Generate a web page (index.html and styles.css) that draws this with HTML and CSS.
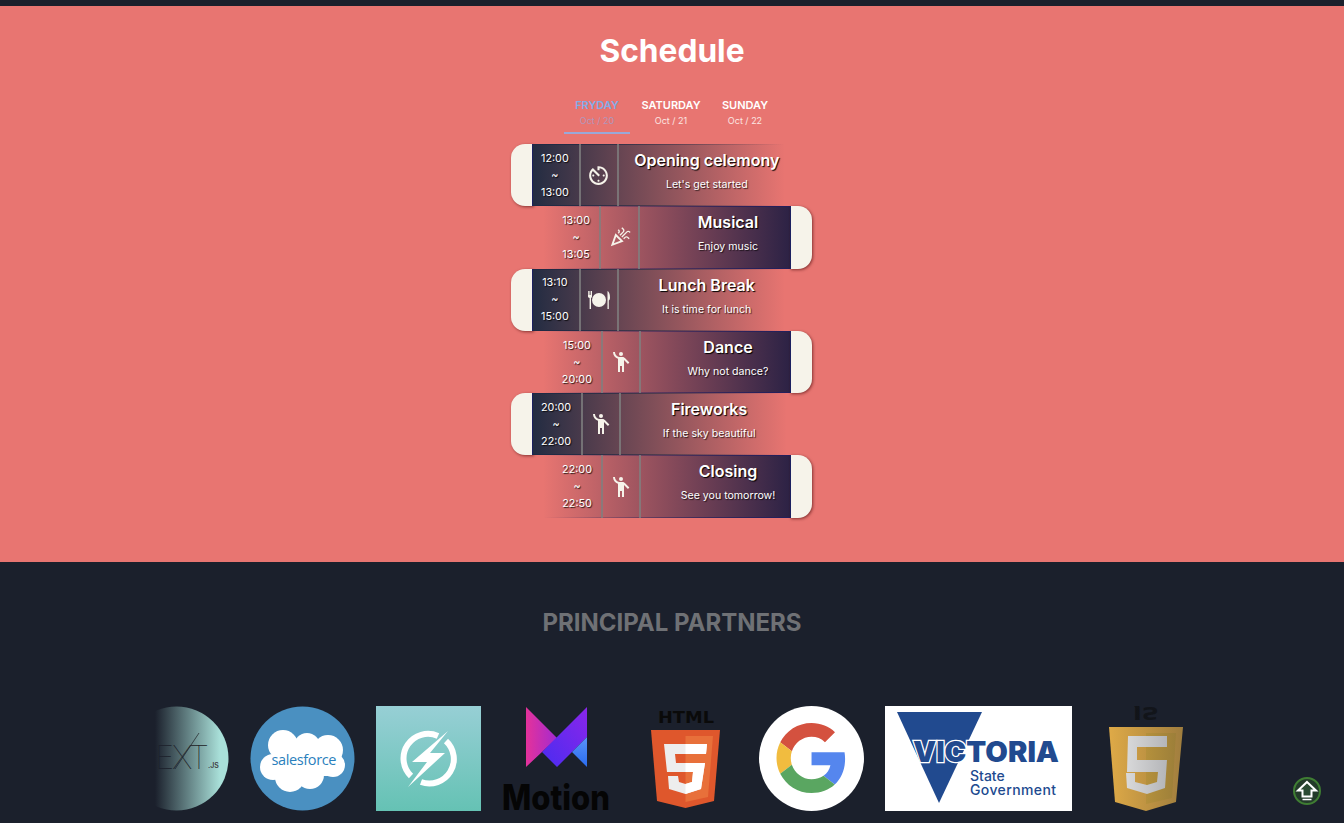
FILE: index.html
```html
<!DOCTYPE html>
<html lang="en">
  <head>
    <meta charset="UTF-8" />
    <meta name="viewport" content="width=device-width, initial-scale=1.0" />
    <title>Schedule</title>
    <link rel="stylesheet" href="styles.css">
  </head>

  <body>
    <div class="topbar"></div>

    <section class="schedule">
      <h1>Schedule</h1>

      <div class="tabs">
        <div class="tab active"><b>FRYDAY</b><span>Oct / 20</span></div>
        <div class="tab"><b>SATURDAY</b><span>Oct / 21</span></div>
        <div class="tab"><b>SUNDAY</b><span>Oct / 22</span></div>
      </div>

      <div class="rows">
        <div class="row odd">
          <div class="cap"></div>
          <div class="band">
            <div class="time">12:00<br />~<br />13:00</div>
            <div class="icon">
              <svg width="25" height="25" viewBox="0 0 24 24"><path d="M11 17c0 .55.45 1 1 1s1-.45 1-1-.45-1-1-1-1 .45-1 1zm0-14v4h2V5.08c3.39.49 6 3.39 6 6.92 0 3.87-3.13 7-7 7s-7-3.13-7-7c0-1.68.59-3.22 1.58-4.42L12 13l1.41-1.41-6.8-6.8v.02C4.42 6.45 3 9.05 3 12c0 4.97 4.02 9 9 9 4.97 0 9-4.03 9-9s-4.03-9-9-9h-1zm7 9c0-.55-.45-1-1-1s-1 .45-1 1 .45 1 1 1 1-.45 1-1zM6 12c0 .55.45 1 1 1s1-.45 1-1-.45-1-1-1-1 .45-1 1z"/></svg>
            </div>
            <div class="info"><h3>Opening celemony</h3><p>Let's get started</p></div>
          </div>
        </div>

        <div class="row even musical">
          <div class="band">
            <div class="time">13:00<br />~<br />13:05</div>
            <div class="icon">
              <svg width="22" height="22" viewBox="0 0 24 24"><path fill-rule="evenodd" d="M2 22l14-5-9-9-5 14zm10.35-5.82L5.3 18.7l2.52-7.05 4.53 4.53z"/><path d="M14.53 12.53l5.59-5.59c.49-.49 1.28-.49 1.77 0l.59.59 1.06-1.06-.59-.59c-1.07-1.07-2.82-1.07-3.89 0l-5.59 5.59zM10.06 6.88l-.59.59 1.06 1.06.59-.59c1.07-1.07 1.07-2.82 0-3.89l-.59-.59-1.06 1.07.59.59c.48.48.48 1.28 0 1.76zM17.06 11.88l-1.59 1.59 1.06 1.06 1.59-1.59c.49-.49 1.28-.49 1.77 0l1.61 1.61 1.06-1.06-1.61-1.61c-1.08-1.07-2.82-1.07-3.89 0zM15.06 5.88l-3.59 3.59 1.06 1.06 3.59-3.59c1.07-1.07 1.07-2.82 0-3.89l-1.59-1.59-1.06 1.06 1.59 1.59c.48.49.48 1.29 0 1.77z"/></svg>
            </div>
            <div class="info"><h3>Musical</h3><p>Enjoy music</p></div>
          </div>
          <div class="cap"></div>
        </div>

        <div class="row odd">
          <div class="cap"></div>
          <div class="band">
            <div class="time">13:10<br />~<br />15:00</div>
            <div class="icon">
              <svg width="24" height="24" viewBox="0 0 24 24"><circle cx="12" cy="12" r="7"/><path d="M1 3h.8v4h.6V3h.8v4h.6V3H5v5.5c0 .8-.5 1.3-1 1.5v11H2.600V10c-.9-.2-1.600-.8-1.600-1.500zM20.500 3c1.500.6 2.500 3 2.500 6.500 0 1.500-.5 2.500-1.200 3V21h-1.300z"/></svg>
            </div>
            <div class="info"><h3>Lunch Break</h3><p>It is time for lunch</p></div>
          </div>
        </div>

        <div class="row even">
          <div class="band">
            <div class="time">15:00<br />~<br />20:00</div>
            <div class="icon">
              <svg width="24" height="24" viewBox="0 0 24 24"><circle cx="12" cy="4" r="2"/><path d="M15.890 8.110C15.500 7.720 14.830 7 13.530 7h-2.540C8.240 6.990 6 4.750 6 2H4c0 3.160 2.110 5.840 5 6.710V22h2v-6h2v6h2V10.050L18.950 14l1.410-1.410-4.470-4.480z"/></svg>
            </div>
            <div class="info"><h3>Dance</h3><p>Why not dance?</p></div>
          </div>
          <div class="cap"></div>
        </div>

        <div class="row odd">
          <div class="cap"></div>
          <div class="band">
            <div class="time">20:00<br />~<br />22:00</div>
            <div class="icon">
              <svg width="24" height="24" viewBox="0 0 24 24"><circle cx="12" cy="4" r="2"/><path d="M15.890 8.110C15.500 7.720 14.830 7 13.530 7h-2.540C8.240 6.990 6 4.750 6 2H4c0 3.160 2.110 5.840 5 6.710V22h2v-6h2v6h2V10.050L18.950 14l1.410-1.410-4.470-4.480z"/></svg>
            </div>
            <div class="info"><h3>Fireworks</h3><p>If the sky beautiful</p></div>
          </div>
        </div>

        <div class="row even">
          <div class="band">
            <div class="time">22:00<br />~<br />22:50</div>
            <div class="icon">
              <svg width="24" height="24" viewBox="0 0 24 24"><circle cx="12" cy="4" r="2"/><path d="M15.890 8.110C15.500 7.720 14.830 7 13.530 7h-2.540C8.240 6.990 6 4.750 6 2H4c0 3.160 2.110 5.840 5 6.710V22h2v-6h2v6h2V10.050L18.950 14l1.410-1.410-4.470-4.480z"/></svg>
            </div>
            <div class="info"><h3>Closing</h3><p>See you tomorrow!</p></div>
          </div>
          <div class="cap"></div>
        </div>
      </div>
    </section>

    <section class="partners">
      <h2>PRINCIPAL PARTNERS</h2>

      <div class="strip">
        <div class="logo first">
          <svg width="105" height="105" viewBox="0 0 105 105">
            <circle cx="52.500" cy="52.500" r="52" fill="#a9e0d9"/>
            <text x="8" y="63" class="next-word" textLength="77">NEXT</text>
            <line x1="51" y1="63" x2="75" y2="27" stroke="#222" stroke-width=".7"/>
            <text x="84" y="62" class="next-js">.JS</text>
          </svg>
        </div>

        <div class="logo">
          <svg width="105" height="105" viewBox="0 0 105 105">
            <circle cx="52.500" cy="52.500" r="52" fill="#4a90c1"/>
            <g fill="#fff">
              <circle cx="33" cy="39" r="15"/><circle cx="57" cy="40" r="13"/><circle cx="78" cy="44" r="15"/>
              <circle cx="23" cy="61" r="13"/><circle cx="40" cy="71" r="15"/><circle cx="60" cy="69" r="14"/>
              <circle cx="83" cy="59" r="12"/><rect x="24" y="38" width="60" height="32"/>
            </g>
            <text x="54" y="59" class="sf-word" textLength="65">salesforce</text>
          </svg>
        </div>

        <div class="logo">
          <svg width="105" height="105" viewBox="0 0 105 105">
            <defs>
              <linearGradient id="tealGrad" x1="0" y1="0" x2="0" y2="1">
                <stop offset="0" stop-color="#97cfd5"/><stop offset="1" stop-color="#65c2b4"/>
              </linearGradient>
            </defs>
            <rect width="105" height="105" fill="url(#tealGrad)"/>
            <g fill="none" stroke="#fff" stroke-width="6">
              <path d="M62 30A24.500 24.500 0 0 0 35 70"/>
              <path d="M70 35A24.500 24.500 0 0 1 45 76"/>
            </g>
            <path d="M72 25L36 56H51L32 81L69 47H54z" fill="#fff"/>
          </svg>
        </div>

        <div class="logo wide">
          <svg width="110" height="105" viewBox="0 0 110 105">
            <defs>
              <linearGradient id="mPink" x1="0" y1="0" x2="1" y2="0">
                <stop offset="0" stop-color="#e4329a"/><stop offset="1" stop-color="#a42ad0"/>
              </linearGradient>
              <linearGradient id="mPurple" x1="1" y1="0" x2="0" y2="1">
                <stop offset="0" stop-color="#8a26ea"/><stop offset="1" stop-color="#4a2cf0"/>
              </linearGradient>
              <linearGradient id="mBlue" x1="0" y1="0" x2="0" y2="1">
                <stop offset="0" stop-color="#5a94f6"/><stop offset="1" stop-color="#2a6cf0"/>
              </linearGradient>
            </defs>
            <path d="M24 1L55 32L40 46L24 61z" fill="url(#mPink)"/>
            <path d="M85 1V31L55 61L40 46z" fill="url(#mPurple)"/>
            <path d="M85 31V61L70 46z" fill="url(#mBlue)"/>
            <text x="0" y="104" class="motion-word" textLength="108" lengthAdjust="spacingAndGlyphs">Motion</text>
          </svg>
        </div>

        <div class="logo">
          <svg width="105" height="105" viewBox="0 0 105 105">
            <text x="25" y="17" class="html-word" textLength="56" lengthAdjust="spacingAndGlyphs">HTML</text>
            <path d="M18 24H87L81 95L52.500 102L24 95z" fill="#df572c"/>
            <path d="M52.500 30H80L75 91L52.500 96z" fill="#e8703a"/>
            <path d="M31 38H74L73 48H42L43 57H72L68 83L52.500 88L36 83L35 70H45L46 76L52.500 78L59 76L60 66H34z" fill="#ededed"/>
            <path d="M52.500 38H74L73 48H52.500zM52.500 57H72L68 83L52.500 88V78L59 76L60 66H52.500z" fill="#fff"/>
          </svg>
        </div>

        <div class="logo">
          <svg width="105" height="105" viewBox="0 0 105 105">
            <circle cx="52.500" cy="52.500" r="52.500" fill="#fff"/>
            <g transform="translate(17.500 17) scale(1.460)">
              <path fill="#d4513f" d="M24 9.500c3.540 0 6.710 1.220 9.210 3.600l6.850-6.850C35.900 2.380 30.470 0 24 0 14.620 0 6.510 5.380 2.560 13.220l7.980 6.190C12.430 13.720 17.740 9.500 24 9.500z"/>
              <path fill="#5586ee" d="M46.980 24.550c0-1.570-.15-3.090-.38-4.550H24v9.020h12.940c-.58 2.960-2.260 5.480-4.780 7.180l7.730 6c4.510-4.180 7.090-10.360 7.090-17.650z"/>
              <path fill="#f1bc3f" d="M10.530 28.590c-.48-1.450-.76-2.990-.76-4.590s.27-3.140.76-4.590l-7.980-6.190C.92 16.460 0 20.120 0 24c0 3.880.92 7.540 2.560 10.780l7.970-6.190z"/>
              <path fill="#5aa661" d="M24 48c6.480 0 11.930-2.130 15.890-5.810l-7.730-6c-2.150 1.450-4.920 2.300-8.160 2.300-6.260 0-11.570-4.220-13.470-9.910l-7.980 6.190C6.510 42.620 14.620 48 24 48z"/>
            </g>
          </svg>
        </div>

        <div class="logo vic">
          <svg width="187" height="105" viewBox="0 0 187 105">
            <rect width="187" height="105" fill="#fff"/>
            <path d="M12 6H97L54 97z" fill="#214a8f"/>
            <text x="28" y="56" class="vic-word" textLength="146" lengthAdjust="spacingAndGlyphs">VICTORIA</text>
            <text x="85" y="75" class="vic-sub">State</text>
            <text x="85" y="89" class="vic-sub" textLength="86">Government</text>
          </svg>
        </div>

        <div class="logo">
          <svg width="105" height="105" viewBox="0 0 105 105">
            <text transform="translate(40 1) scale(1 -1)" y="0" class="js-word" textLength="26" lengthAdjust="spacingAndGlyphs">JS</text>
            <path d="M16 21H90L83 96L53 105L22 96z" fill="#dfaa47"/>
            <path d="M53 27H83L79 92L53 98z" fill="#d2a63f"/>
            <path d="M35 30H74V41H44V54H74L72 82L54 88L34 82L33 67H42V76L54 79L64 76L65 66H34z" fill="#e8e8e8"/>
          </svg>
        </div>

        <div class="fade left"></div>
        <div class="fade right"></div>
      </div>
    </section>

    <!-- back to top -->
    <a class="totop" href="#">
      <svg width="28" height="28" viewBox="0 0 28 28">
        <circle cx="14" cy="14" r="13" fill="#233a2a" stroke="#3f7d33" stroke-width="2"/>
        <path d="M14 5L23 13.500H18.500V19.500H9.500V13.500H5z" fill="#2b4b33" stroke="#fff" stroke-width="2"/>
        <path d="M9.500 22.500H18.500" stroke="#fff" stroke-width="1.500"/>
      </svg>
    </a>
  </body>
</html>
```

FILE: styles.css
```css
* {
  box-sizing: border-box;
}

html,
body {
  margin: 0;
  height: 823px;
  overflow: hidden;
}

body {
  font-family: Inter, "Liberation Sans", sans-serif;
  background-color: #1b202c;
  color: #fff;
}

.topbar {
  height: 6px;
  background-color: #1b202c;
}

.schedule {
  height: 556px;
  background-color: #e87571;
  padding-top: 25px;
  display: flex;
  flex-direction: column;
  align-items: center;
}

h1 {
  margin: 0;
  font-size: 31.7px;
  line-height: 40px;
  font-weight: 700;
}

.tabs {
  display: flex;
  gap: 8px;
  margin-top: 25px;
  margin-left: -2px;
}

.tab {
  width: 66px;
  height: 38px;
  display: flex;
  flex-direction: column;
  align-items: center;
  white-space: nowrap;
}

.tab b {
  font-size: 11px;
  line-height: 14px;
  margin-top: 2px;
  font-weight: 600;
}

.tab span {
  font-size: 9px;
  line-height: 13px;
  margin-top: 2px;
  color: #fbe6e2;
}

.tab.active {
  border-bottom: 2px solid #9aa8d8;
}

.tab.active b {
  color: #82ace8;
}

.tab.active span {
  color: #b296bb;
}

.rows {
  width: 301px;
  margin-top: 10px;
  margin-left: -21px;
  display: flex;
  flex-direction: column;
}

.row {
  height: 62.3px;
  display: flex;
}

.row.odd {
  align-self: flex-start;
}

.row.even {
  align-self: flex-end;
}

.band {
  display: flex;
}

.odd .band {
  background:
    linear-gradient(to right, #1f2a44, transparent) top / 100% 1px no-repeat,
    linear-gradient(to right, #1f2a44, transparent) bottom / 100% 1px no-repeat,
    linear-gradient(to right, #232c42, transparent);
}

.even .band {
  padding-left: 10px;
  background:
    linear-gradient(to left, #241f5c, transparent) top / 100% 1px no-repeat,
    linear-gradient(to left, #241f5c, transparent) bottom / 100% 1px no-repeat,
    linear-gradient(to left, #2c2245, transparent);
}

.cap {
  width: 22px;
  background-color: #f6f3ea;
  box-shadow: 1px 1px 3px rgba(70, 10, 10, 0.6);
}

.odd .cap {
  border-right: 1px solid #1b2060;
  border-radius: 14px 0 0 14px;
}

.even .cap {
  border-left: 1px solid #1b2060;
  border-radius: 0 14px 14px 0;
}

.time {
  padding: 0 9px;
  border-right: 2px solid rgba(128, 128, 128, 0.8);
  font-size: 10.8px;
  line-height: 17px;
  text-align: center;
  display: flex;
  align-items: center;
  text-shadow: 1px 1px 1px rgba(0, 0, 0, 0.8);
}

.odd .time {
  padding: 0 10px 0 8px;
}

.icon {
  width: 38px;
  border-right: 2px solid rgba(128, 128, 128, 0.8);
  display: flex;
  align-items: center;
  justify-content: center;
}

.musical .icon {
  width: 39px;
}

.icon svg {
  fill: #f6f3ea;
}

.info {
  text-align: center;
  white-space: nowrap;
}

.odd .info {
  width: 166px;
  padding-left: 10px;
}

.even .info {
  width: 149px;
  padding-left: 25px;
}

.musical .info {
  width: 150px;
  padding-left: 26px;
}

.info h3 {
  margin: 5px 0 0;
  font-size: 16px;
  line-height: 22px;
  font-weight: 600;
  text-shadow: 1px 1px 1px #000;
}

.info p {
  margin: 7px 0 0;
  font-size: 10.6px;
  line-height: 14px;
  text-shadow: 1px 1px 1px rgba(0, 0, 0, 0.7);
}

.partners {
  height: 261px;
  background-color: #1b202c;
  padding-top: 46px;
}

h2 {
  margin: 0;
  font-size: 24px;
  line-height: 30px;
  font-weight: 700;
  text-align: center;
  color: #6f7175;
}

.strip {
  width: 1034px;
  height: 105px;
  margin: 68px 0 0 155px;
  display: flex;
  gap: 21px;
  overflow: hidden;
  position: relative;
}

.logo {
  flex: none;
  width: 105px;
  height: 105px;
}

.logo.first {
  margin-left: -31px;
}

.logo.wide {
  width: 110px;
}

.logo.vic {
  width: 187px;
}

.logo svg {
  display: block;
}

.next-word {
  font-family: Inter, sans-serif;
  font-size: 33px;
  font-weight: 100;
  fill: #222;
}

.next-js {
  font-family: Inter, sans-serif;
  font-size: 7px;
  font-weight: 600;
  fill: #444;
}

.sf-word {
  font-family: "Open Sans", sans-serif;
  font-size: 14.5px;
  text-anchor: middle;
  fill: #2a7fbd;
}

.motion-word {
  font-family: Inter, sans-serif;
  font-size: 35px;
  font-weight: 800;
  fill: #050505;
}

.html-word {
  font-family: "DejaVu Sans", sans-serif;
  font-size: 15px;
  font-weight: 700;
  fill: #0a0a0a;
}

.vic-word {
  font-family: Inter, sans-serif;
  font-size: 28px;
  font-weight: 900;
  fill: #214a8f;
  stroke: #fff;
  stroke-width: 2.5px;
  paint-order: stroke;
}

.vic-sub {
  font-family: Inter, sans-serif;
  font-size: 14px;
  font-weight: 500;
  fill: #214a8f;
}

.js-word {
  font-family: "DejaVu Sans", sans-serif;
  font-size: 17px;
  font-weight: 700;
  fill: #101216;
}

.fade {
  position: absolute;
  top: 0;
  bottom: 0;
}

.fade.left {
  left: 0;
  width: 65px;
  background: linear-gradient(to right, #1b202c, transparent);
}

.fade.right {
  right: 0;
  width: 80px;
  background: linear-gradient(to left, rgba(27, 32, 44, 0.35), transparent);
}

.totop {
  position: fixed;
  right: 23px;
  bottom: 18px;
  width: 28px;
  height: 28px;
}
```
